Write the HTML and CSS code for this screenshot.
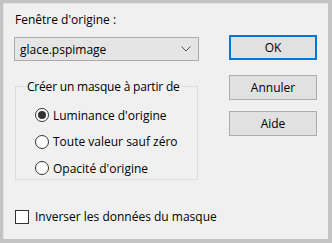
FILE: index.html
```html
<!DOCTYPE html>
<html lang="fr">
  <head>
    <meta charset="UTF-8" />
    <title>Masque</title>
    <link rel="stylesheet" href="styles.css">
  </head>
  <body>
    <div class="dialog">
      <div class="left">
        <div class="label">Fenêtre d'origine :</div>
        <div class="select">
          <span>glace.pspimage</span>
          <svg class="chevron" width="10" height="6" viewBox="0 0 10 6"><path d="M0.5 0.5 L5 5 L9.5 0.5" fill="none" stroke="#555" stroke-width="1"/></svg>
        </div>
        <fieldset class="group">
          <legend>Créer un masque à partir de</legend>
          <div class="radio"><span class="dot checked"></span>Luminance d'origine</div>
          <div class="radio"><span class="dot"></span>Toute valeur sauf zéro</div>
          <div class="radio"><span class="dot"></span>Opacité d'origine</div>
        </fieldset>
        <div class="check"><span class="box"></span>Inverser les données du masque</div>
      </div>
      <div class="right">
        <button class="btn default">OK</button>
        <button class="btn cancel">Annuler</button>
        <button class="btn help">Aide</button>
      </div>
    </div>
  </body>
</html>
```

FILE: styles.css
```css
* {
  padding: 0;
  margin: 0;
  box-sizing: border-box;
}
body {
  width: 332px;
  height: 243px;
  background-color: #c3c3c3;
  padding: 3px 4px 4px 3px;
  font-family: "Open Sans", sans-serif;
  font-size: 12px;
  color: #000;
}
.dialog {
  background-color: #f0f0f0;
  height: 236px;
  display: flex;
  border-left: 1px solid #e3e3e3;
  border-top: 1px solid #e3e3e3;
}
.left {
  width: 214px;
  padding-left: 10px;
}
.label {
  margin-top: 7px;
  height: 17px;
  line-height: 17px;
  padding-left: 1px;
}
.select {
  margin-top: 9px;
  width: 185px;
  height: 24px;
  background-color: #e5e5e5;
  border: 1px solid #acacac;
  display: flex;
  align-items: center;
  justify-content: space-between;
  padding: 0 7px 0 5px;
}
.group {
  margin-top: 17px;
  margin-left: 1px;
  width: 183px;
  height: 102px;
  border: 1px solid #dcdcdc;
  padding: 7px 0 0 19px;
}
.group legend {
  white-space: nowrap;
  margin-left: -10px;
  padding: 0 2px;
  line-height: 17px;
  letter-spacing: -0.2px;
}
.radio {
  display: flex;
  align-items: center;
  height: 26.5px;
}
.dot {
  width: 14px;
  height: 14px;
  border: 1px solid #333;
  border-radius: 50%;
  background-color: #fff;
  margin-right: 4px;
  display: flex;
  align-items: center;
  justify-content: center;
}
.dot.checked::after {
  content: "";
  width: 8px;
  height: 8px;
  border-radius: 50%;
  background-color: #333;
}
.check {
  margin-top: 28px;
  margin-left: 1px;
  display: flex;
  align-items: center;
}
.box {
  width: 14px;
  height: 14px;
  border: 1px solid #333;
  background-color: #fff;
  margin-right: 6px;
}
.right {
  padding-top: 31px;
  margin-left: 11px;
  display: flex;
  flex-direction: column;
}
.btn {
  width: 88px;
  height: 25px;
  background-color: #e1e1e1;
  border: 1px solid #adadad;
  font-family: "Open Sans", sans-serif;
  font-size: 12px;
  color: #000;
}
.btn.default {
  border: 2px solid #0078d7;
}
.btn.cancel {
  margin-top: 15px;
}
.btn.help {
  margin-top: 11px;
}
```
